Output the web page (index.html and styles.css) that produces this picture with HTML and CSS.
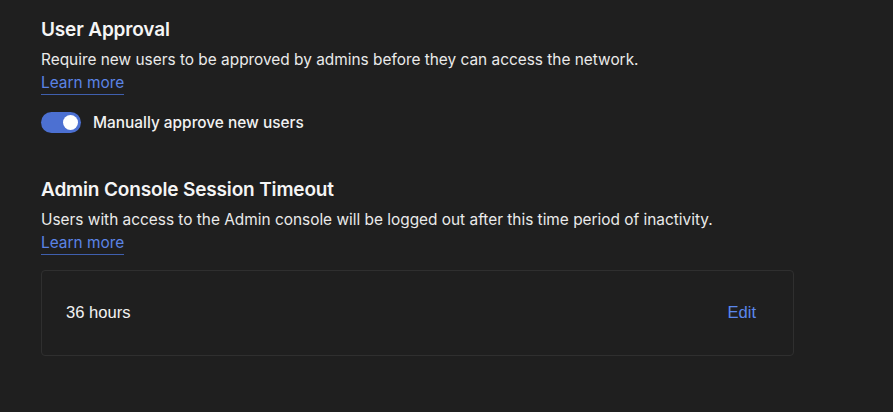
FILE: index.html
```html
<!DOCTYPE html>
<html>
<head>
<meta charset="utf-8">
<link rel="stylesheet" href="styles.css">
</head>
<body>
<div class="page">
  <section class="section">
    <h2 class="title">User Approval</h2>
    <p class="desc">Require new users to be approved by admins before they can access the network.</p>
    <a class="link" href="#">Learn more</a>
    <label class="toggle-row">
      <span class="toggle"><span class="knob"></span></span>
      <span class="toggle-label">Manually approve new users</span>
    </label>
  </section>
  <section class="section second">
    <h2 class="title">Admin Console Session Timeout</h2>
    <p class="desc">Users with access to the Admin console will be logged out after this time period of inactivity.</p>
    <a class="link" href="#">Learn more</a>
    <div class="card">
      <span class="value">36 hours</span>
      <a class="edit" href="#">Edit</a>
    </div>
  </section>
</div>
</body>
</html>
```
FILE: styles.css
```css
html, body {
  margin: 0;
  padding: 0;
  background: #1f1f1f;
}
body {
  font-family: Inter, "Noto Sans", sans-serif;
  color: #f2f2f2;
  width: 893px;
  height: 412px;
  overflow: hidden;
}
.page {
  padding: 18px 99px 0 41px;
}
.section {
  display: flex;
  flex-direction: column;
  align-items: flex-start;
}
.second {
  margin-top: 45px;
}
.title {
  margin: 0;
  font-size: 19px;
  font-weight: 600;
  line-height: 24px;
  letter-spacing: -0.15px;
  color: #f5f5f5;
}
.desc {
  margin: 6px 0 0;
  font-size: 15.4px;
  line-height: 24px;
  color: #eaeaea;
}
.link {
  font-size: 15.4px;
  line-height: 22px;
  color: #5b84e6;
  text-decoration: none;
  border-bottom: 1px solid #3f5fae;
}
.toggle-row {
  display: flex;
  align-items: center;
  gap: 12px;
  margin-top: 17px;
}
.toggle {
  width: 40px;
  height: 21px;
  border-radius: 11px;
  background: #4c70d2;
  position: relative;
}
.knob {
  position: absolute;
  right: 3px;
  top: 3px;
  width: 15px;
  height: 15px;
  border-radius: 50%;
  background: #ffffff;
}
.toggle-label {
  font-size: 15.4px;
  font-weight: 500;
  color: #f2f2f2;
}
.card {
  margin-top: 15px;
  align-self: stretch;
  box-sizing: border-box;
  height: 86px;
  border: 1px solid #2f2f2f;
  border-radius: 4px;
  display: flex;
  align-items: center;
  justify-content: space-between;
  padding: 0 37px 0 24px;
  font-family: "Liberation Sans", Arial, sans-serif;
  font-size: 16.6px;
}
.value {
  color: #f2f2f2;
}
.edit {
  color: #5b87ec;
  text-decoration: none;
}
```
